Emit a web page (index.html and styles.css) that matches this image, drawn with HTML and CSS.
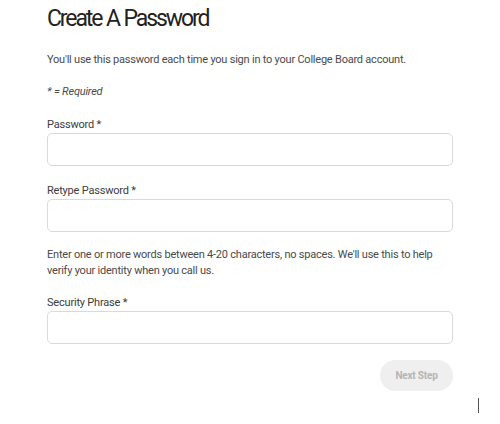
FILE: index.html
```html
<!DOCTYPE html>
<html lang="en">
<head>
<meta charset="utf-8">
<title>Create A Password</title>
<link rel="stylesheet" href="styles.css">
</head>
<body>
<main class="page">
  <h1 class="title">Create A Password</h1>
  <p class="intro">You'll use this password each time you sign in to your College Board account.</p>
  <p class="required">* = Required</p>
  <div class="field">
    <label class="label" for="pw">Password *</label>
    <input class="input" id="pw" type="password">
  </div>
  <div class="field">
    <label class="label" for="pw2">Retype Password *</label>
    <input class="input" id="pw2" type="password">
  </div>
  <p class="hint">Enter one or more words between 4-20 characters, no spaces. We'll use this to help verify your identity when you call us.</p>
  <div class="field">
    <label class="label" for="sp">Security Phrase *</label>
    <input class="input" id="sp" type="text">
  </div>
  <div class="actions">
    <button class="btn" type="button" disabled>Next Step</button>
  </div>
</main>
<span class="caret"></span>
</body>
</html>
```
FILE: styles.css
```css
html, body {
  margin: 0;
  padding: 0;
  background: #ffffff;
}
body {
  font-family: Roboto, "Liberation Sans", Arial, sans-serif;
  color: #4a4a4a;
  position: relative;
  height: 424px;
}
.page {
  width: 406px;
  padding-left: 47px;
  display: flex;
  flex-direction: column;
}
.title {
  margin: 5px 0 0;
  font-size: 23px;
  line-height: 28px;
  font-weight: 400;
  color: #222222;
  letter-spacing: -2.1px;
  word-spacing: 1px;
}
.intro {
  margin: 19px 0 0;
  font-size: 11px;
  line-height: 16px;
  letter-spacing: -0.22px;
}
.required {
  margin: 16px 0 0;
  font-size: 11px;
  line-height: 16px;
  font-style: italic;
  letter-spacing: -0.2px;
}
.field {
  display: flex;
  flex-direction: column;
  margin-top: 17px;
}
.label {
  font-size: 11px;
  line-height: 16px;
  color: #3c3c3c;
  letter-spacing: -0.2px;
}
.input {
  box-sizing: border-box;
  height: 33px;
  width: 100%;
  margin: 0;
  border: 1px solid #d9d9d9;
  border-radius: 5px;
  background: #fff;
  font: inherit;
  outline: none;
}
.hint {
  margin: 15px 0 0;
  font-size: 11px;
  line-height: 16px;
  letter-spacing: -0.22px;
}
.hint + .field {
  margin-top: 16px;
}
.actions {
  display: flex;
  justify-content: flex-end;
  margin-top: 16px;
}
.btn {
  width: 73px;
  height: 31px;
  border: none;
  border-radius: 16px;
  background: #efefef;
  color: #b5b5b5;
  font-family: Roboto, "Liberation Sans", Arial, sans-serif;
  font-size: 10px;
  font-weight: 700;
  letter-spacing: -0.2px;
  padding: 0;
}
.caret {
  position: absolute;
  left: 478px;
  top: 398px;
  width: 1px;
  height: 15px;
  background: #555;
}
```
